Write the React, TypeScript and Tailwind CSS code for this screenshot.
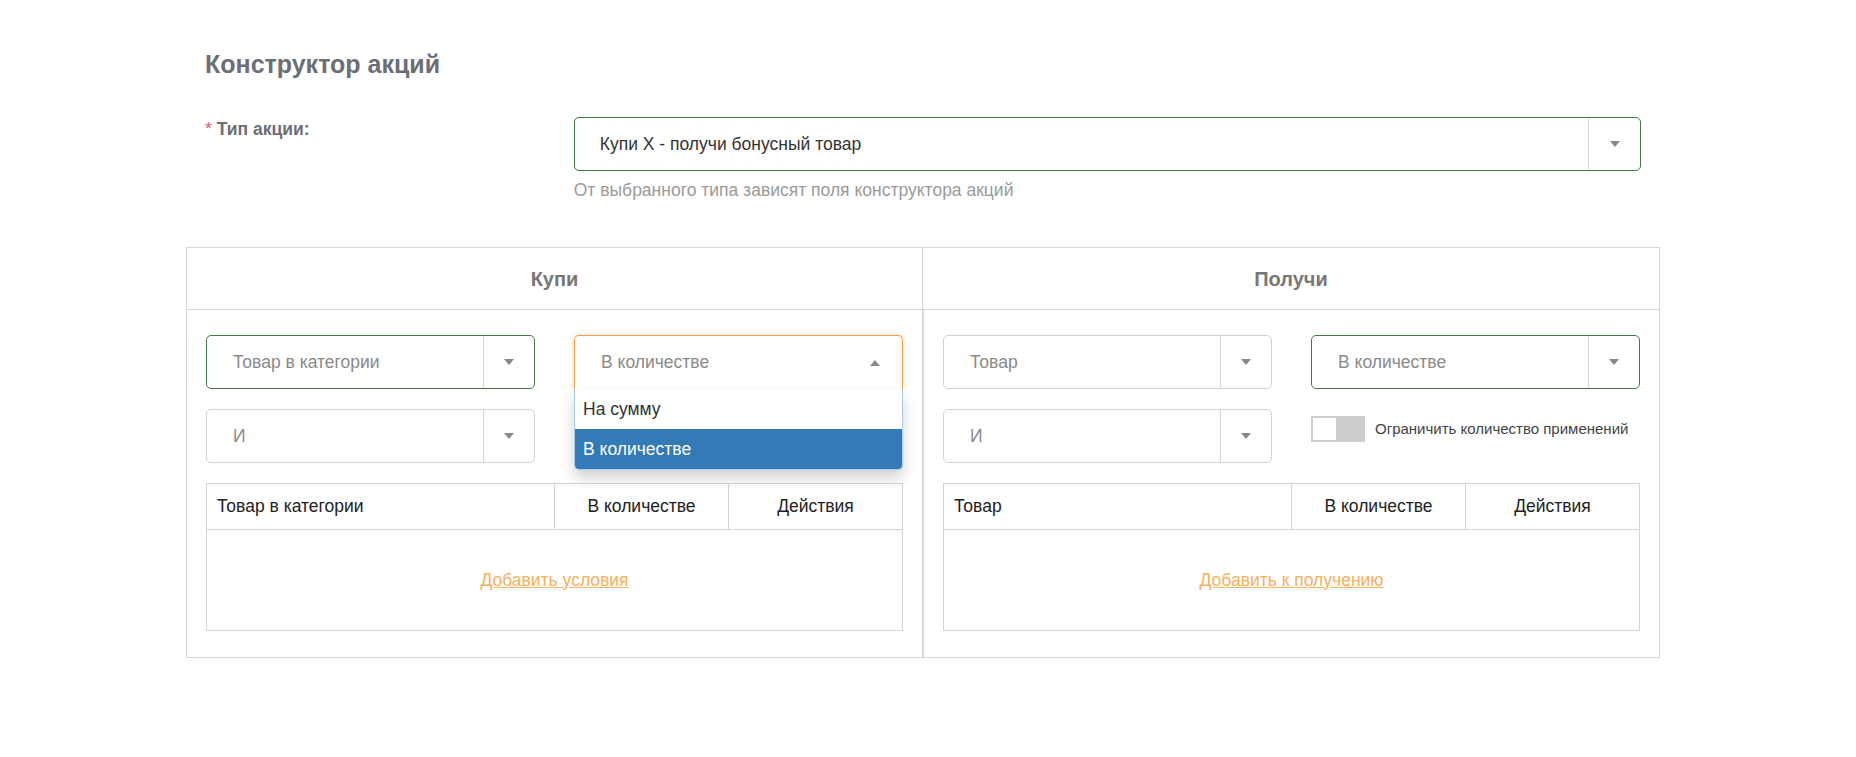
import React from 'react'

type Tone = 'green' | 'gray'

function Caret({ up = false }: { up?: boolean }) {
  return up ? (
    <span className="block h-0 w-0 border-x-[5px] border-b-[6px] border-x-transparent border-b-[#888]" />
  ) : (
    <span className="block h-0 w-0 border-x-[5px] border-t-[6px] border-x-transparent border-t-[#888]" />
  )
}

function Select({ text, tone }: { text: string; tone: Tone }) {
  return (
    <div
      className={`flex h-[54px] rounded-[5px] border bg-white ${
        tone === 'green' ? 'border-[#3f7a41]' : 'border-[#d2d2d2]'
      }`}
    >
      <div className="flex flex-1 items-center pl-[26px] text-[17.5px] text-[#8a8a8a]">{text}</div>
      <div className="flex w-[51px] items-center justify-center border-l border-[#d6d6d6]">
        <Caret />
      </div>
    </div>
  )
}

function OpenSelect() {
  return (
    <div className="relative">
      <div className="flex h-[54px] items-center rounded-t-[5px] border border-b-0 border-[#f5a04a] bg-white pl-[26px] pr-[22px] shadow-[0_0_5px_rgba(245,160,74,0.35)]">
        <span className="flex-1 text-[17.5px] text-[#8a8a8a]">В количестве</span>
        <Caret up />
      </div>
      <div className="absolute left-0 right-0 top-full z-10 overflow-hidden rounded-b-[5px] border border-t-0 border-[#a9cdee] bg-white shadow-[0_8px_14px_rgba(0,0,0,0.18)]">
        <div className="flex h-[40px] items-center pl-[8px] text-[17.5px] text-[#333]">На сумму</div>
        <div className="flex h-[40px] items-center bg-[#337ab7] pl-[8px] text-[17.5px] text-white">В количестве</div>
      </div>
    </div>
  )
}

function Toggle({ label }: { label: string }) {
  return (
    <div className="mt-[7px] flex items-center gap-[10px] self-start">
      <div className="h-[26px] w-[54px] bg-[#cdcdcd] p-[2px]">
        <div className="h-[22px] w-[23px] bg-white" />
      </div>
      <span className="text-[15px] text-[#444]">{label}</span>
    </div>
  )
}

function ItemsTable({ first, link }: { first: string; link: string }) {
  return (
    <table className="w-full border-collapse text-[17.5px] text-[#222]">
      <thead>
        <tr className="h-[46px]">
          <th className="w-1/2 border border-[#d4d4d4] pl-[10px] text-left font-normal">{first}</th>
          <th className="w-1/4 border border-[#d4d4d4] text-center font-normal">В количестве</th>
          <th className="w-1/4 border border-[#d4d4d4] text-center font-normal">Действия</th>
        </tr>
      </thead>
      <tbody>
        <tr className="h-[101px]">
          <td colSpan={3} className="border border-[#d4d4d4] text-center">
            <a href="#" className="text-[#f6b05c] underline">
              {link}
            </a>
          </td>
        </tr>
      </tbody>
    </table>
  )
}

export default function App() {
  return (
    <div className="min-h-screen bg-white font-['Liberation_Sans',Arial,sans-serif]">
      <div className="ml-[186px] w-[1474px] pt-[49px]">
        <h1 className="px-[19px] text-[25px] font-bold leading-[30px] text-[#6b6e76]">Конструктор акций</h1>

        {/* Тип акции */}
        <div className="mt-[38px] flex px-[19px]">
          <label className="w-[369px] text-[17.5px] font-bold leading-[24px] text-[#6b6e76]">
            <span className="mr-[5px] font-normal text-[#e8546f]">*</span>Тип акции:
          </label>
          <div className="w-[1068px]">
            <div className="flex h-[54px] rounded-[5px] border border-[#3f7a41] bg-white">
              <div className="flex flex-1 items-center pl-[25px] text-[17.5px] text-[#333]">
                Купи X - получи бонусный товар
              </div>
              <div className="flex w-[52px] items-center justify-center border-l border-[#d6d6d6]">
                <Caret />
              </div>
            </div>
            <p className="mt-[7px] text-[17.5px] leading-[24px] text-[#9a9a9a]">
              От выбранного типа зависят поля конструктора акций
            </p>
          </div>
        </div>

        {/* Конструктор */}
        <div className="mt-[45px] border border-[#d6d6d6]">
          <div className="grid grid-cols-2 border-b border-[#d6d6d6]">
            <div className="flex h-[61px] items-center justify-center border-r border-[#d6d6d6] text-[20px] font-bold text-[#777]">
              Купи
            </div>
            <div className="flex h-[61px] items-center justify-center text-[20px] font-bold text-[#777]">
              Получи
            </div>
          </div>
          <div className="grid grid-cols-2">
            <div className="border-r border-[#d6d6d6] px-[19px] pb-[26px] pt-[25px]">
              <div className="grid grid-cols-2 gap-x-[39px] gap-y-[20px]">
                <Select text="Товар в категории" tone="green" />
                <OpenSelect />
                <Select text="И" tone="gray" />
                <div />
              </div>
              <div className="mt-[20px]">
                <ItemsTable first="Товар в категории" link="Добавить условия" />
              </div>
            </div>
            <div className="border-l border-[#d6d6d6] px-[19px] pb-[26px] pt-[25px]">
              <div className="grid grid-cols-2 gap-x-[39px] gap-y-[20px]">
                <Select text="Товар" tone="gray" />
                <Select text="В количестве" tone="green" />
                <Select text="И" tone="gray" />
                <Toggle label="Ограничить количество применений" />
              </div>
              <div className="mt-[20px]">
                <ItemsTable first="Товар" link="Добавить к получению" />
              </div>
            </div>
          </div>
        </div>
      </div>
    </div>
  )
}
